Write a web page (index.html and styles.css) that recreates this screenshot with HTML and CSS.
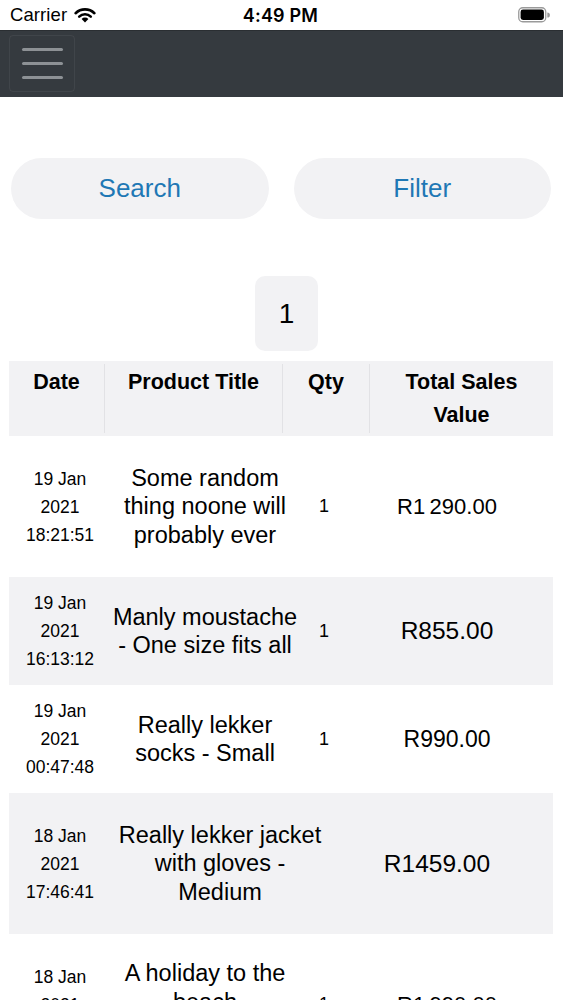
FILE: index.html
```html
<!DOCTYPE html>
<html lang="en">
<head>
<meta charset="utf-8">
<title>Sales</title>
<link rel="stylesheet" href="styles.css">
</head>
<body>
<div class="status">
  <div class="status-left">
    <span class="carrier">Carrier</span>
    <svg class="wifi" viewBox="0 0 24 17" width="24" height="17" aria-hidden="true">
      <path d="M2.6 7.2 A13.5 13.5 0 0 1 21.4 7.2" fill="none" stroke="#000" stroke-width="2.6" stroke-linecap="round"/>
      <path d="M6.2 10.6 A8.4 8.4 0 0 1 17.8 10.6" fill="none" stroke="#000" stroke-width="2.6" stroke-linecap="round"/>
      <path d="M12 16.4 L8.6 13 A4.8 4.8 0 0 1 15.4 13 Z" fill="#000"/>
    </svg>
  </div>
  <div class="time">4:49 PM</div>
  <div class="status-right">
    <svg class="battery" viewBox="0 0 32 16" width="32" height="16" aria-hidden="true">
      <rect x="0.75" y="0.75" width="27" height="14" rx="4" fill="none" stroke="#9a9a9a" stroke-width="1.3"/>
      <rect x="2.6" y="2.6" width="23.3" height="10.3" rx="2.4" fill="#000"/>
      <path d="M29.3 5.4 A2.4 2.4 0 0 1 29.3 10.6 Z" fill="#9a9a9a"/>
    </svg>
  </div>
</div>

<nav class="navbar">
  <button class="toggler" aria-label="Menu">
    <span class="bar"></span>
    <span class="bar"></span>
    <span class="bar"></span>
  </button>
</nav>

<main class="main">
  <div class="actions">
    <button class="pill">Search</button>
    <button class="pill">Filter</button>
  </div>

  <div class="pager">
    <div class="page">1</div>
  </div>

  <div class="table">
    <div class="thead">
      <div class="th">Date</div>
      <div class="th th-sep">Product Title</div>
      <div class="th th-sep">Qty</div>
      <div class="th th-sep">Total Sales<br>Value</div>
    </div>

    <div class="tr tall">
      <div class="td date">19 Jan<br>2021<br>18:21:51</div>
      <div class="td title">Some random<br>thing noone will<br>probably ever</div>
      <div class="td qty">1</div>
      <div class="td total val-sm">R1&#8239;290.00</div>
    </div>

    <div class="tr short alt">
      <div class="td date">19 Jan<br>2021<br>16:13:12</div>
      <div class="td title">Manly moustache<br>- One size fits all</div>
      <div class="td qty">1</div>
      <div class="td total val-lg">R855.00</div>
    </div>

    <div class="tr short">
      <div class="td date">19 Jan<br>2021<br>00:47:48</div>
      <div class="td title">Really lekker<br>socks - Small</div>
      <div class="td qty">1</div>
      <div class="td total val-md">R990.00</div>
    </div>

    <div class="tr tall alt noqty">
      <div class="td date">18 Jan<br>2021<br>17:46:41</div>
      <div class="td title">Really lekker jacket<br>with gloves -<br>Medium</div>
      <div class="td total val-lg">R1459.00</div>
    </div>

    <div class="tr tall">
      <div class="td date">18 Jan<br>2021<br>15:02:33</div>
      <div class="td title title-top">A holiday to the<br>beach</div>
      <div class="td qty">1</div>
      <div class="td total val-sm">R1&#8239;990.00</div>
    </div>
  </div>
</main>
</body>
</html>
```

FILE: styles.css
```css
* { box-sizing: border-box; }

html, body {
  margin: 0;
  padding: 0;
  background: #ffffff;
}

body {
  width: 563px;
  height: 1000px;
  overflow: hidden;
  font-family: "Liberation Sans", Arial, sans-serif;
  color: #000;
}

/* status bar */
.status {
  height: 30px;
  display: grid;
  grid-template-columns: 1fr auto 1fr;
  align-items: center;
  padding: 0 12px 0 10px;
  font-size: 18.5px;
}
.status-left {
  display: flex;
  align-items: center;
  gap: 6px;
}
.carrier { letter-spacing: 0.1px; }
.wifi { display: block; margin-top: -1px; }
.time {
  font-weight: 600;
  font-family: "Inter", "Liberation Sans", sans-serif;
  font-size: 18px;
  letter-spacing: 0.2px;
}
.status-right {
  display: flex;
  justify-content: flex-end;
}
.battery { display: block; margin-right: 1px; }

/* navbar */
.navbar {
  height: 67px;
  background: #353a3f;
  border-top: 1px solid #2a2e32;
  padding: 4px 9px;
  display: flex;
  align-items: flex-start;
}
.toggler {
  width: 66px;
  height: 57px;
  background: transparent;
  border: 1px solid rgba(255, 255, 255, 0.06);
  border-radius: 4px;
  padding: 0;
  display: flex;
  flex-direction: column;
  align-items: center;
  justify-content: center;
  gap: 11px;
}
.bar {
  display: block;
  width: 41px;
  height: 3px;
  border-radius: 2px;
  background: #8d9195;
}

/* main */
.main {
  padding-top: 61px;
}
.actions {
  display: grid;
  grid-template-columns: 1fr 1fr;
  gap: 25px;
  padding: 0 12px 0 11px;
}
.pill {
  height: 61px;
  border: none;
  border-radius: 31px;
  background: #f2f2f4;
  color: #1f78b5;
  font-family: "Liberation Sans", Arial, sans-serif;
  font-size: 26px;
  padding: 0;
}

.pager {
  display: flex;
  justify-content: center;
  padding-top: 57px;
  padding-left: 10px;
}
.page {
  width: 63px;
  height: 75px;
  border-radius: 10px;
  background: #f2f2f4;
  display: flex;
  align-items: center;
  justify-content: center;
  font-size: 28px;
}

/* table */
.table {
  margin: 10px 10px 0 9px;
}
.thead {
  display: grid;
  grid-template-columns: 95px 178px 87px 1fr;
  background: #f2f2f4;
  height: 75px;
}
.th {
  font-weight: bold;
  font-size: 21.5px;
  line-height: 33px;
  text-align: center;
  padding-top: 5px;
}
.th-sep {
  border-left: 1px solid #e2e2e5;
  margin: 3px 0;
  padding-top: 2px;
}

.tr {
  display: grid;
  grid-template-columns: 102px 188px 50px 196px 1fr;
  align-items: center;
}
.tr.noqty {
  grid-template-columns: 102px 218px 216px 1fr;
}
.tr.tall { height: 141px; }
.tr.short { height: 108px; }
.tr.alt { background: #f2f2f4; }

.td {
  text-align: center;
  white-space: nowrap;
}
.date {
  font-size: 17.5px;
  line-height: 28px;
}
.title {
  font-size: 23.5px;
  line-height: 28.5px;
}
.title-top {
  align-self: start;
  padding-top: 25px;
}
.qty {
  font-size: 18px;
}
.val-sm { font-size: 22px; }
.val-md { font-size: 23px; }
.val-lg { font-size: 24.5px; }
```
